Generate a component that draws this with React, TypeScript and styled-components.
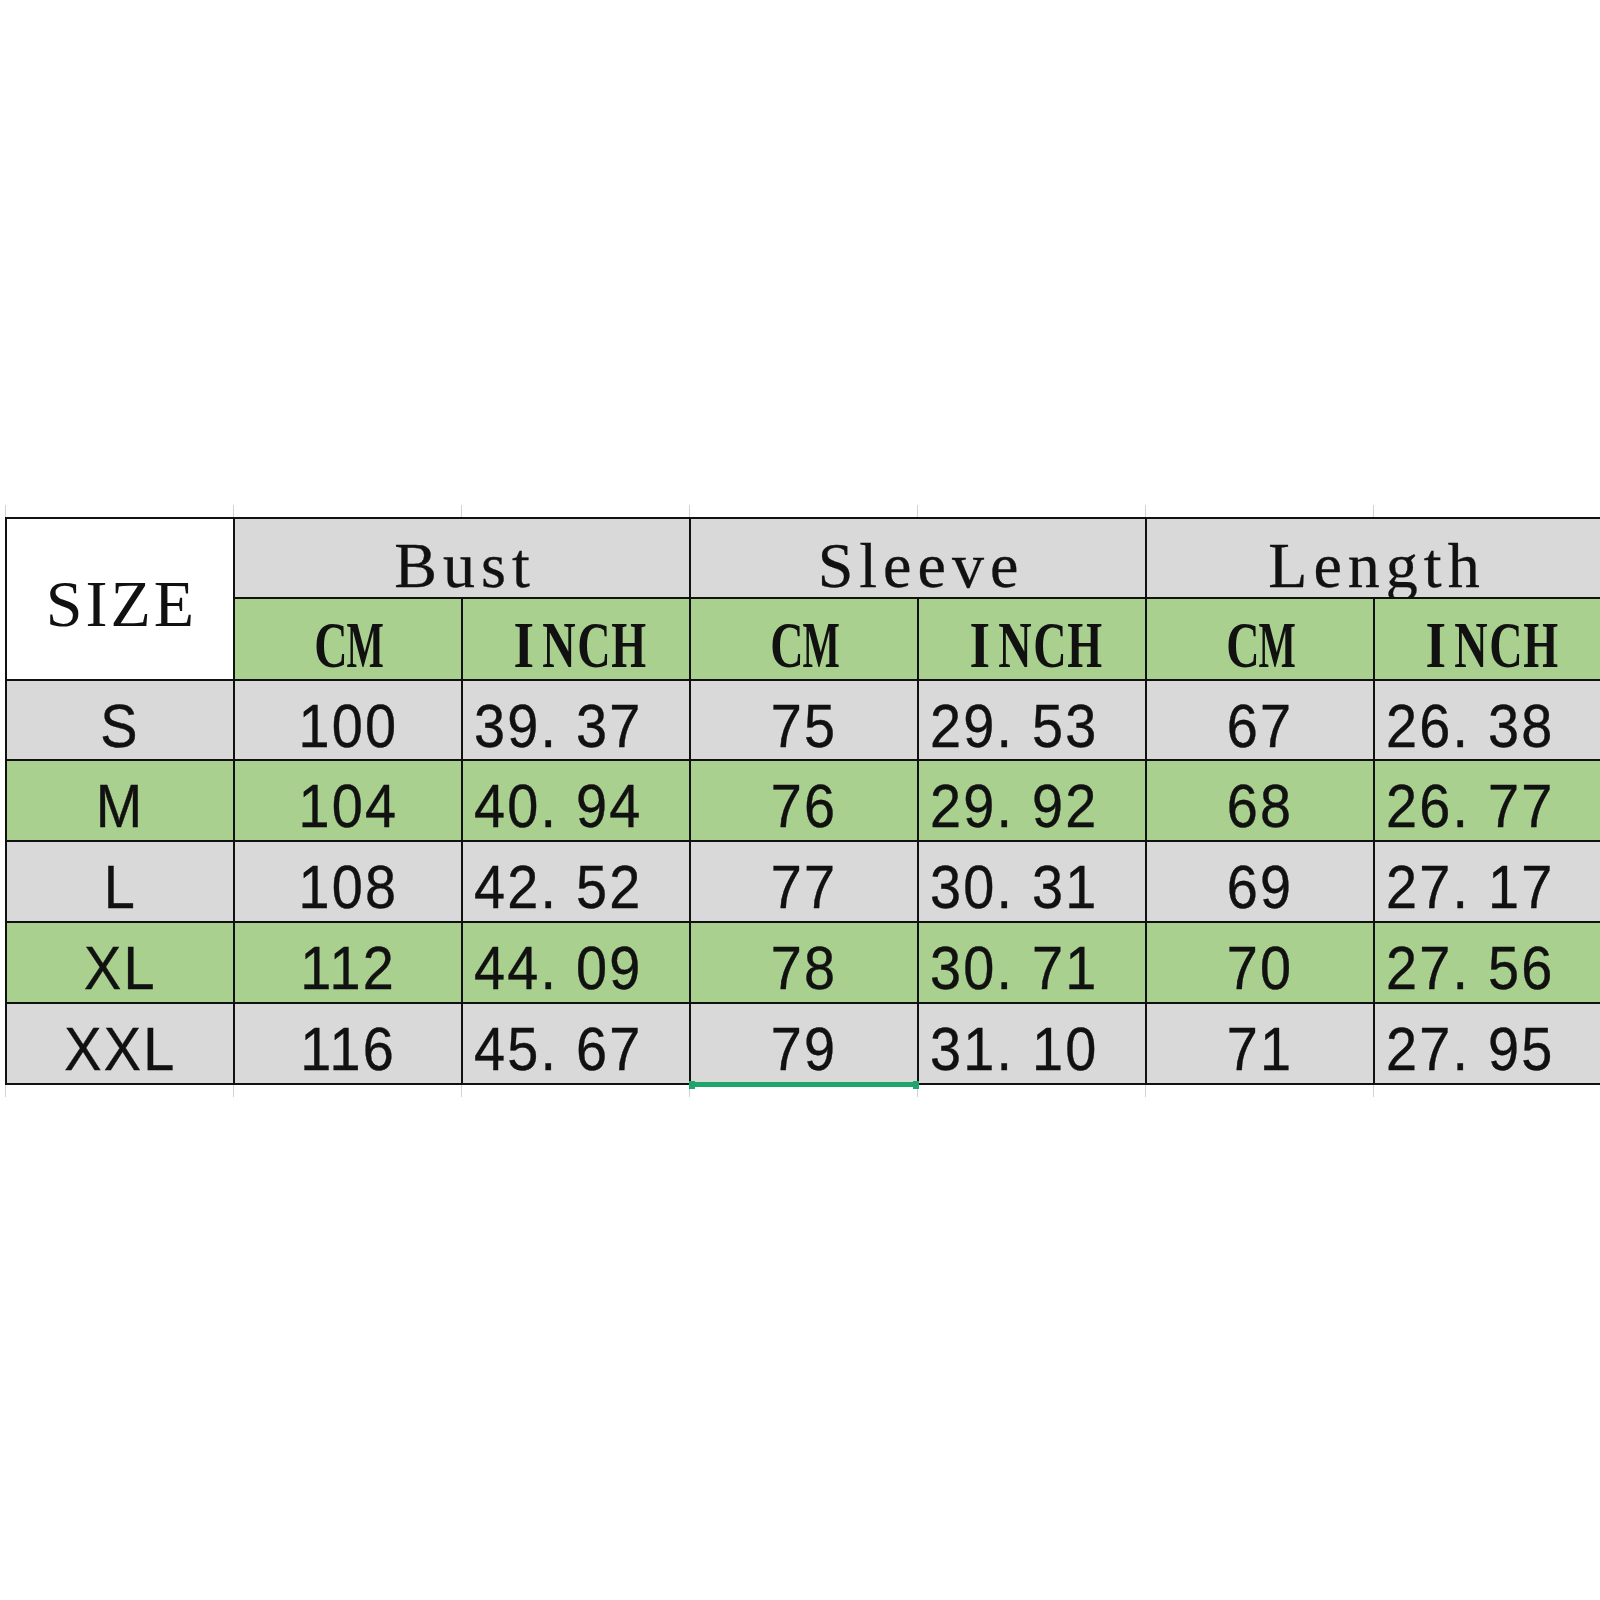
import styled, { createGlobalStyle } from "styled-components";

type Tone = "white" | "gray" | "green";

const tones: Record<Tone, string> = {
  white: "#ffffff",
  gray: "#d9d9d9",
  green: "#a9d08e",
};

const GlobalStyle = createGlobalStyle`
  html, body {
    margin: 0;
    padding: 0;
    background: #ffffff;
    overflow: hidden;
  }
  body {
    font-family: "Liberation Sans", Arial, sans-serif;
    color: #111111;
  }
`;

const Page = styled.div`
  width: 1600px;
  min-height: 1600px;
  display: flex;
  flex-direction: column;
  justify-content: center;
  padding-top: 2px;
  box-sizing: border-box;
  overflow: hidden;
`;

const TickRow = styled.div`
  display: grid;
  grid-template-columns: repeat(8, 228px);
  height: 12px;
  padding-left: 5px;
`;

const Tick = styled.div`
  border-left: 1px solid #d2d2d2;
`;

const Sheet = styled.div`
  display: grid;
  grid-template-columns: repeat(7, 226px);
  grid-template-rows: 78px 80px 78px 79px 79px 79px 79px;
  gap: 2px;
  padding: 2px;
  margin-left: 5px;
  width: max-content;
  background: #111111;
`;

const Cell = styled.div<{
  $tone: Tone;
  $align?: "center" | "left";
  $pt: number;
  $col?: string;
  $row?: string;
}>`
  position: relative;
  display: flex;
  align-items: flex-start;
  justify-content: ${(p) => (p.$align === "left" ? "flex-start" : "center")};
  padding-top: ${(p) => p.$pt}px;
  padding-left: ${(p) => (p.$align === "left" ? "11px" : "0")};
  box-sizing: border-box;
  background: ${(p) => tones[p.$tone]};
  grid-column: ${(p) => p.$col ?? "auto"};
  grid-row: ${(p) => p.$row ?? "auto"};
  white-space: pre;
  line-height: 1;
`;

const SizeLabel = styled.span`
  font-family: "Liberation Serif", "Times New Roman", serif;
  font-size: 66px;
  letter-spacing: 3px;
  padding-left: 3px;
`;

const GroupLabel = styled.span`
  font-family: "Liberation Serif", "Times New Roman", serif;
  font-size: 64px;
  letter-spacing: 6px;
  padding-left: 6px;
  -webkit-text-stroke: 0.3px #111;
`;

const Unit = styled.span`
  display: inline-flex;
`;

const Glyph = styled.span`
  display: inline-flex;
  justify-content: center;
  width: 35px;
  font-family: "Liberation Serif", "Times New Roman", serif;
  font-weight: bold;
  font-size: 66px;
`;

const GlyphInner = styled.span<{ $squeeze: number }>`
  display: inline-block;
  transform: scaleX(${(p) => p.$squeeze});
`;

const Value = styled.span<{ $left?: boolean }>`
  display: inline-block;
  font-family: "Liberation Sans", Arial, sans-serif;
  font-size: 62px;
  letter-spacing: 2.5px;
  -webkit-text-stroke: 0.4px #111;
  transform: scaleX(0.9);
  transform-origin: ${(p) => (p.$left ? "left center" : "center")};
`;

const Selection = styled.div`
  position: absolute;
  left: -2px;
  right: -2px;
  bottom: -4px;
  height: 5px;
  background: #1fa56c;

  &::before,
  &::after {
    content: "";
    position: absolute;
    bottom: -2px;
    width: 6px;
    height: 8px;
    background: #1fa56c;
  }
  &::before {
    left: 0;
  }
  &::after {
    right: 0;
  }
`;

const squeeze: Record<string, number> = {
  C: 0.7,
  M: 0.6,
  I: 0.8,
  N: 0.7,
  H: 0.68,
};

function UnitLabel({ text }: { text: string }) {
  return (
    <Unit>
      {text.split("").map((ch, i) => (
        <Glyph key={i}>
          <GlyphInner $squeeze={squeeze[ch] ?? 0.7}>{ch}</GlyphInner>
        </Glyph>
      ))}
    </Unit>
  );
}

const groups = ["Bust", "Sleeve", "Length"];

const rows: string[][] = [
  ["S", "100", "39. 37", "75", "29. 53", "67", "26. 38"],
  ["M", "104", "40. 94", "76", "29. 92", "68", "26. 77"],
  ["L", "108", "42. 52", "77", "30. 31", "69", "27. 17"],
  ["XL", "112", "44. 09", "78", "30. 71", "70", "27. 56"],
  ["XXL", "116", "45. 67", "79", "31. 10", "71", "27. 95"],
];

function Ticks() {
  return (
    <TickRow>
      {Array.from({ length: 8 }).map((_, i) => (
        <Tick key={i} />
      ))}
    </TickRow>
  );
}

export default function App() {
  return (
    <>
      <GlobalStyle />
      <Page>
        <Ticks />
        <Sheet>
          <Cell $tone="white" $pt={52} $row="1 / span 2" $col="1">
            <SizeLabel>SIZE</SizeLabel>
          </Cell>
          {groups.map((g) => (
            <Cell key={g} $tone="gray" $pt={15} $col="span 2">
              <GroupLabel>{g}</GroupLabel>
            </Cell>
          ))}
          {groups.flatMap((g) => [
            <Cell key={g + "cm"} $tone="green" $pt={13}>
              <UnitLabel text="CM" />
            </Cell>,
            <Cell key={g + "in"} $tone="green" $pt={13}>
              <UnitLabel text="INCH" />
            </Cell>,
          ])}
          {rows.map((row, r) =>
            row.map((v, c) => {
              const isInch = c > 0 && c % 2 === 0;
              return (
                <Cell
                  key={`${r}-${c}`}
                  $tone={r % 2 === 1 ? "green" : "gray"}
                  $align={isInch ? "left" : "center"}
                  $pt={14}
                >
                  <Value $left={isInch}>{v}</Value>
                  {r === rows.length - 1 && c === 3 ? <Selection /> : null}
                </Cell>
              );
            }),
          )}
        </Sheet>
        <Ticks />
      </Page>
    </>
  );
}
